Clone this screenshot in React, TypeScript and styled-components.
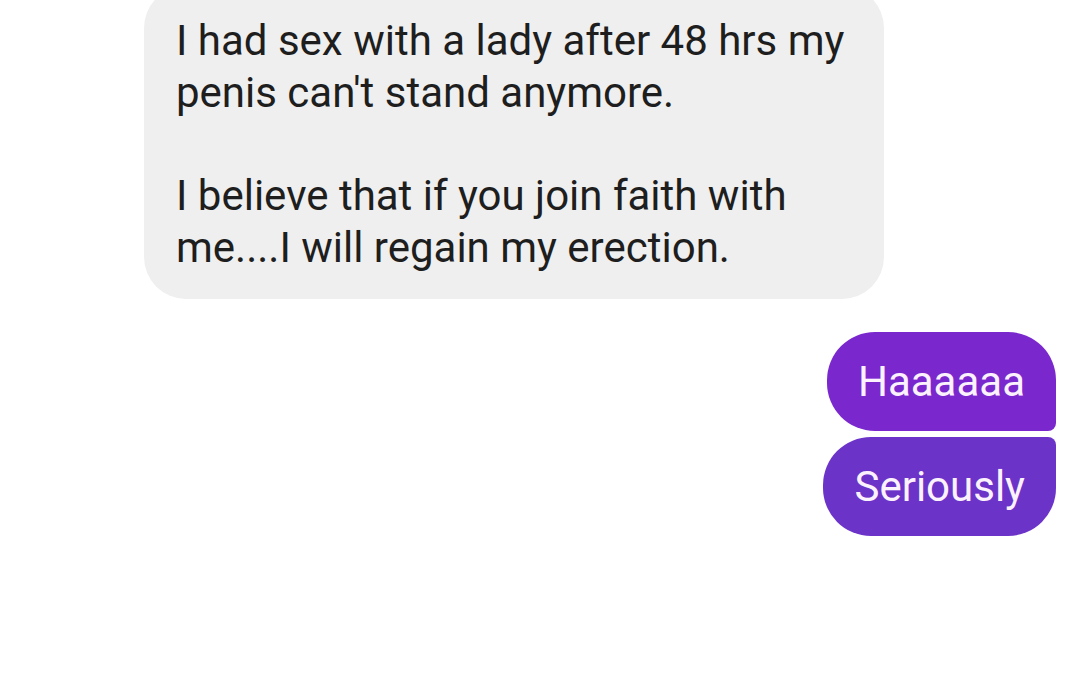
import styled, { createGlobalStyle } from "styled-components";

const GlobalStyle = createGlobalStyle`
  html, body {
    margin: 0;
    padding: 0;
    background: #ffffff;
    overflow: hidden;
  }
  body {
    font-family: Roboto, "Noto Sans", sans-serif;
  }
`;

const Thread = styled.div`
  width: 1077px;
  height: 697px;
  display: flex;
  flex-direction: column;
  overflow: hidden;
  background: #ffffff;
`;

// incoming message, its top is scrolled off the screen
const IncomingBubble = styled.div`
  align-self: flex-start;
  margin: -14px 0 0 144px;
  width: 740px;
  box-sizing: border-box;
  padding: 29px 32px 25px 32px;
  background: #efefef;
  border-radius: 42px;
  color: #1e1e1e;
  font-size: 42px;
  line-height: 52px;
`;

const Paragraph = styled.p`
  margin: 0;
  & + & {
    margin-top: 51px;
  }
`;

const OutgoingGroup = styled.div`
  display: flex;
  flex-direction: column;
  align-items: flex-end;
  gap: 6px;
  margin-top: 33px;
  padding-right: 21px;
`;

const OutgoingBubble = styled.div<{ $first?: boolean }>`
  height: 99px;
  box-sizing: border-box;
  padding: 0 31px;
  display: flex;
  align-items: center;
  color: #fcf2fd;
  font-size: 42px;
  background: ${(p) => (p.$first ? "#7a28ce" : "#6c33c9")};
  border-radius: ${(p) => (p.$first ? "48px 48px 8px 48px" : "48px 8px 48px 48px")};
`;

const App = () => {
  return (
    <>
      <GlobalStyle />
      <Thread>
        <IncomingBubble>
          <Paragraph>I had sex with a lady after 48 hrs my penis can't stand anymore.</Paragraph>
          <Paragraph>I believe that if you join faith with me....I will regain my erection.</Paragraph>
        </IncomingBubble>
        <OutgoingGroup>
          <OutgoingBubble $first>Haaaaaa</OutgoingBubble>
          <OutgoingBubble>Seriously</OutgoingBubble>
        </OutgoingGroup>
      </Thread>
    </>
  );
};

export default App;
